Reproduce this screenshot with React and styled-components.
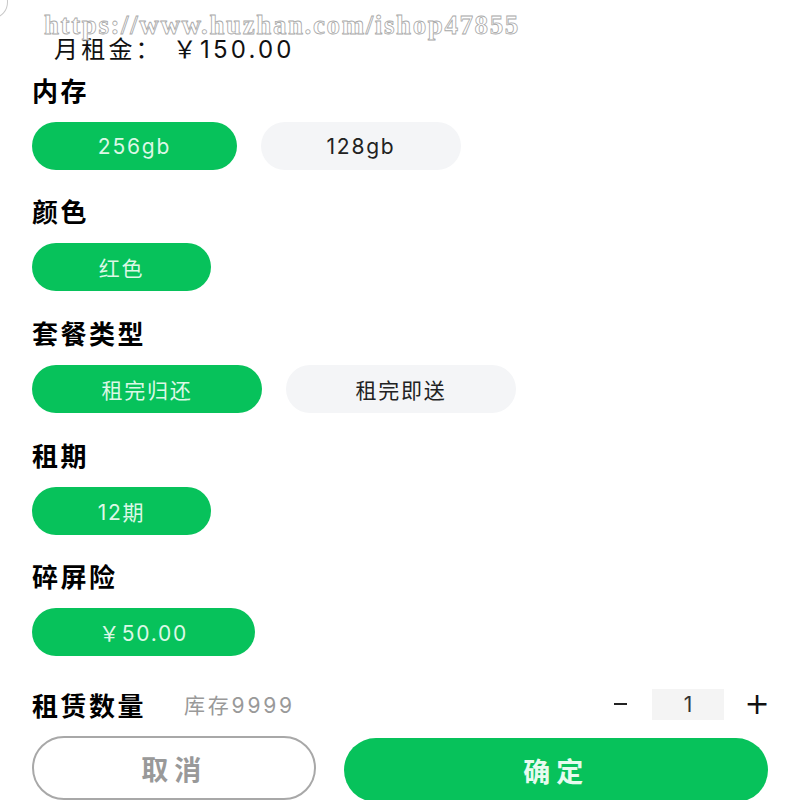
import React from 'react';
import styled, { createGlobalStyle } from 'styled-components';

const GlobalStyle = createGlobalStyle`
  html, body {
    margin: 0;
    padding: 0;
    background: #fff;
  }
  body {
    font-family: "Noto Sans CJK SC", "Noto Sans", sans-serif;
    color: #111;
  }
`;

const GREEN = '#07c25b';

const Page = styled.div`
  position: relative;
  width: 800px;
  height: 800px;
  overflow: hidden;
  box-sizing: border-box;
  padding: 34px 32px 0;
  display: flex;
  flex-direction: column;
`;

const Watermark = styled.div`
  position: absolute;
  top: 10px;
  left: 44px;
  font-family: "Liberation Serif", serif;
  font-size: 27px;
  font-weight: 700;
  letter-spacing: 1.6px;
  color: #fff;
  -webkit-text-stroke: 0.8px #a8a8a8;
  pointer-events: none;
  white-space: nowrap;
`;

const CornerArc = styled.div`
  position: absolute;
  top: -14px;
  left: -20px;
  width: 26px;
  height: 30px;
  border-radius: 50%;
  border: 1px solid #c8c8c8;
`;

const PriceLine = styled.div`
  padding-left: 22px;
  height: 31px;
  line-height: 31px;
  font-family: Inter, "Noto Sans CJK SC", sans-serif;
  font-size: 24px;
  letter-spacing: 3.2px;
  color: #111;
`;

const Section = styled.div`
  display: flex;
  flex-direction: column;
  margin-top: ${p => p.$top}px;
`;

const Label = styled.div`
  height: 30px;
  line-height: 26px;
  font-size: 26px;
  font-weight: 700;
  letter-spacing: 2.5px;
  color: #000;
`;

const Options = styled.div`
  display: flex;
  gap: 24px;
  margin-top: 15px;
`;

const Pill = styled.div`
  width: ${p => p.$w}px;
  height: 48px;
  border-radius: 24px;
  display: flex;
  align-items: center;
  justify-content: center;
  font-family: Inter, "Noto Sans CJK SC", sans-serif;
  font-size: 21px;
  letter-spacing: 1.8px;
  background: ${p => (p.$active ? GREEN : '#f4f5f7')};
  color: ${p => (p.$active ? '#dcf8e6' : '#222')};
`;

const QtyRow = styled.div`
  display: flex;
  align-items: center;
  height: 32px;
  margin-top: 32px;
`;

const QtyLabel = styled.span`
  font-size: 26px;
  font-weight: 700;
  letter-spacing: 2.5px;
  color: #000;
`;

const Stock = styled.span`
  margin-left: 38px;
  font-family: Inter, "Noto Sans CJK SC", sans-serif;
  font-size: 21px;
  color: #999;
  letter-spacing: 2.8px;
  flex: 1;
`;

const Stepper = styled.div`
  display: flex;
  align-items: center;
  height: 32px;
`;

const Minus = styled.span`
  width: 13px;
  height: 2px;
  margin-right: 25px;
  background: #222;
`;

const Plus = styled.span`
  width: 22px;
  margin-left: 22px;
  display: flex;
  align-items: center;
  justify-content: center;
  font-family: "DejaVu Sans", sans-serif;
  font-size: 30px;
  line-height: 1;
  color: #111;
`;

const Count = styled.div`
  width: 72px;
  height: 31px;
  background: #f4f4f4;
  display: flex;
  align-items: center;
  justify-content: center;
  font-family: Inter, sans-serif;
  font-size: 21px;
  color: #333;
`;

const Actions = styled.div`
  display: flex;
  gap: 28px;
  margin-top: 16px;
`;

const Button = styled.div`
  height: 64px;
  border-radius: 32px;
  box-sizing: border-box;
  display: flex;
  align-items: center;
  justify-content: center;
  font-size: 27px;
  font-weight: 700;
  letter-spacing: 6px;
  ${p =>
    p.$primary
      ? `flex: 426; background: ${GREEN}; color: #e6fbef; margin-top: 2px;`
      : 'flex: 282; background: #fff; color: #999; border: 2px solid #a8a8a8;'}
`;

const sections = [
  { label: '内存', top: 12, options: [{ text: '256gb', w: 205, active: true }, { text: '128gb', w: 200 }] },
  { label: '颜色', top: 28, options: [{ text: '红色', w: 179, active: true }] },
  { label: '套餐类型', top: 29, options: [{ text: '租完归还', w: 230, active: true }, { text: '租完即送', w: 230 }] },
  { label: '租期', top: 29, options: [{ text: '12期', w: 179, active: true }] },
  { label: '碎屏险', top: 28, options: [{ text: '￥50.00', w: 223, active: true }] },
];

const App = () => (
  <>
    <GlobalStyle />
    <Page>
      <CornerArc />
      <PriceLine>月租金： ￥150.00</PriceLine>
      {sections.map(s => (
        <Section key={s.label} $top={s.top}>
          <Label>{s.label}</Label>
          <Options>
            {s.options.map(o => (
              <Pill key={o.text} $w={o.w} $active={o.active}>{o.text}</Pill>
            ))}
          </Options>
        </Section>
      ))}
      <QtyRow>
        <QtyLabel>租赁数量</QtyLabel>
        <Stock>库存9999</Stock>
        <Stepper>
          <Minus />
          <Count>1</Count>
          <Plus>+</Plus>
        </Stepper>
      </QtyRow>
      <Actions>
        <Button>取消</Button>
        <Button $primary>确定</Button>
      </Actions>
      <Watermark>https://www.huzhan.com/ishop47855</Watermark>
    </Page>
  </>
);

export default App;
